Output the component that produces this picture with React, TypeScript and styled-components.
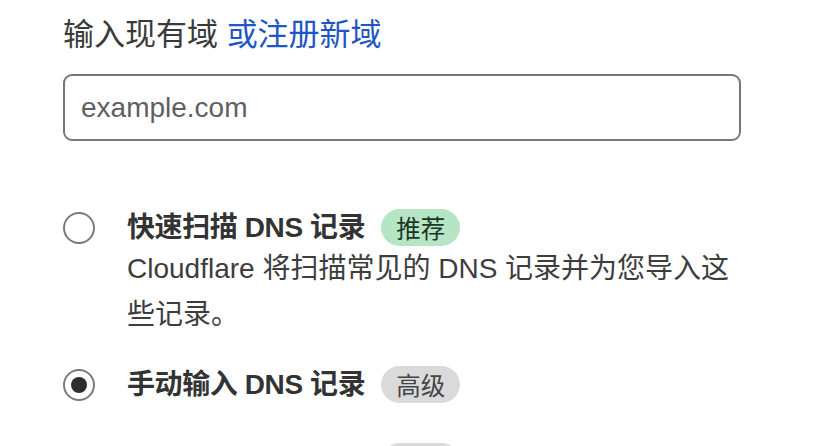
import React from "react";
import styled, { createGlobalStyle } from "styled-components";

const Global = createGlobalStyle`
  html, body { margin: 0; padding: 0; background: #ffffff; }
  body {
    font-family: "Liberation Sans", "Noto Sans CJK SC", sans-serif;
    color: #333333;
  }
`;

const Page = styled.div`
  width: 678px;
  padding: 13px 0 0 63px;
  display: flex;
  flex-direction: column;
`;

const Label = styled.div`
  font-size: 31px;
  line-height: 44px;
  color: #3a3a3a;
`;

const Link = styled.a`
  color: #1f55c4;
  text-decoration: none;
  cursor: pointer;
`;

const Input = styled.input`
  box-sizing: border-box;
  margin-top: 17px;
  width: 678px;
  height: 67px;
  border: 2px solid #777777;
  border-radius: 9px;
  padding: 0 16px;
  font-family: "Liberation Sans", "Noto Sans CJK SC", sans-serif;
  font-size: 28px;
  color: #333;
  outline: none;
  &::placeholder { color: #5f5f5f; }
`;

const Options = styled.div`
  margin-top: 68px;
  display: flex;
  flex-direction: column;
  gap: 40px;
`;

const Option = styled.label`
  display: flex;
  align-items: flex-start;
  gap: 32px;
  cursor: pointer;
`;

const Radio = styled.span<{ $checked?: boolean }>`
  box-sizing: border-box;
  flex: none;
  width: 32px;
  height: 32px;
  margin-top: 2.5px;
  border-radius: 50%;
  border: 2px solid #7a7a7a;
  display: flex;
  align-items: center;
  justify-content: center;
  &::after {
    content: "";
    width: 16px;
    height: 16px;
    border-radius: 50%;
    background: #2d2d2d;
    display: ${(p) => (p.$checked ? "block" : "none")};
  }
`;

const Body = styled.div`
  display: flex;
  flex-direction: column;
  flex: 1;
  min-width: 0;
`;

const TitleRow = styled.div`
  display: flex;
  align-items: center;
  gap: 16px;
  height: 37px;
`;

const Title = styled.span`
  font-size: 28px;
  font-weight: 700;
  letter-spacing: -0.4px;
  color: #333333;
  line-height: 37px;
`;

const Badge = styled.span<{ $tone: "green" | "gray" }>`
  display: inline-flex;
  align-items: center;
  justify-content: center;
  height: 37px;
  padding: 0 15px;
  border-radius: 19px;
  font-size: 24.5px;
  background: ${(p) => (p.$tone === "green" ? "#b6e5c5" : "#dadada")};
  color: ${(p) => (p.$tone === "green" ? "#1c3526" : "#454545")};
`;

const Desc = styled.p`
  margin: 0 0 -12px 0;
  font-size: 28px;
  line-height: 46px;
  color: #3d3d3d;
`;

export default function App() {
  return (
    <>
      <Global />
      <Page>
        <Label>
          输入现有域 <Link>或注册新域</Link>
        </Label>
        <Input placeholder="example.com" />
        <Options>
          <Option>
            <Radio />
            <Body>
              <TitleRow>
                <Title>快速扫描 DNS 记录</Title>
                <Badge $tone="green">推荐</Badge>
              </TitleRow>
              <Desc>Cloudflare 将扫描常见的 DNS 记录并为您导入这些记录。</Desc>
            </Body>
          </Option>
          <Option>
            <Radio $checked />
            <Body>
              <TitleRow>
                <Title>手动输入 DNS 记录</Title>
                <Badge $tone="gray">高级</Badge>
              </TitleRow>
            </Body>
          </Option>
          <Option>
            <Radio />
            <Body>
              <TitleRow>
                <Title>上传 DNS 区域文件</Title>
                <Badge $tone="gray">高级</Badge>
              </TitleRow>
            </Body>
          </Option>
        </Options>
      </Page>
    </>
  );
}
